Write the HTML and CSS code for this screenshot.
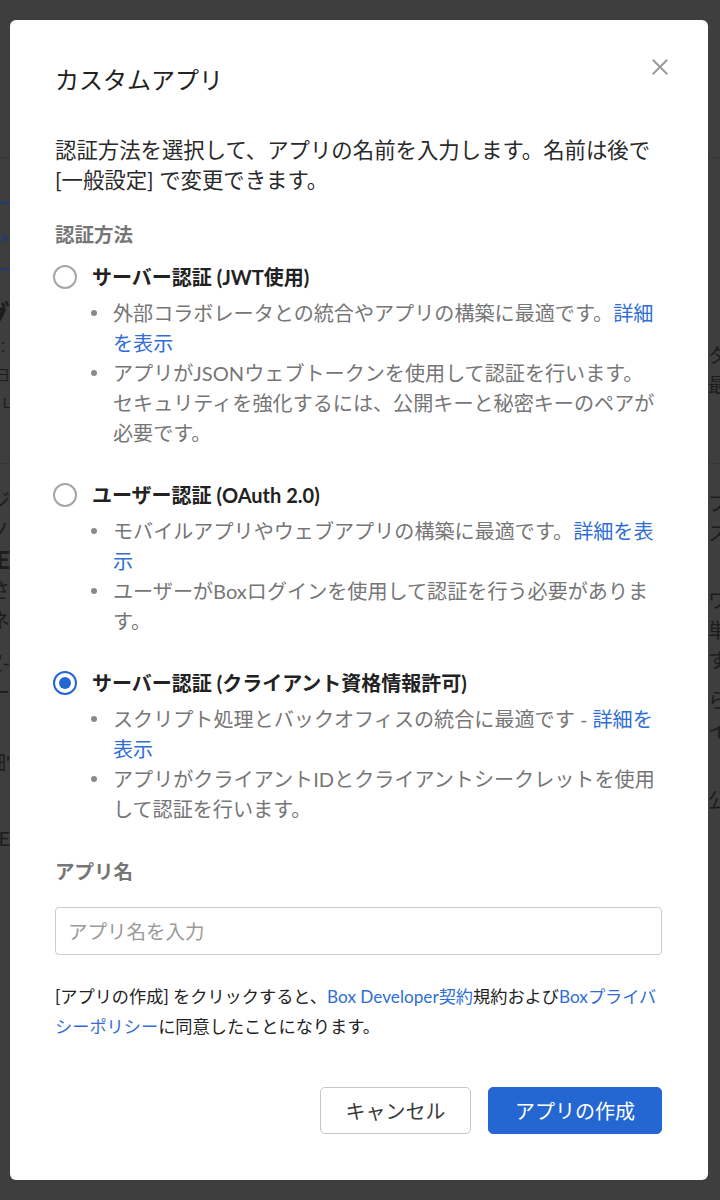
FILE: index.html
```html
<!DOCTYPE html>
<html lang="ja">
<head>
<meta charset="utf-8">
<title>カスタムアプリ</title>
<link rel="stylesheet" href="styles.css">
</head>
<body>
<div class="stage">
  <div class="bg-page" aria-hidden="true">
    <div class="bg-header"></div>
    <div class="bg-sec bg-sec1">
      <div class="bg-left">
        <div class="bg-box"><span class="bg-chev">»</span></div>
        <div class="bg-big">アプリのグ</div>
        <div class="bg-small">説明：</div>
        <div class="bg-small">設定日</div>
        <div class="bg-small">ID L</div>
      </div>
      <div class="bg-right">
        <div class="bg-line r1">タイプ</div>
        <div class="bg-line">最近</div>
      </div>
    </div>
    <div class="bg-sec bg-sec2">
      <div class="bg-left">
        <div class="bg-line l1">アプリジ</div>
        <div class="bg-line">アクセノ</div>
        <div class="bg-line bg-bold">BOXE</div>
        <div class="bg-line">アプリさ</div>
        <div class="bg-line">統合ネ</div>
        <div class="bg-line l2">設定-</div>
        <div class="bg-line">説明ー</div>
        <div class="bg-line l3">詳細'</div>
        <div class="bg-line l4">BOXE</div>
      </div>
      <div class="bg-right">
        <div class="bg-line r2">ブラウザ</div>
        <div class="bg-line">スクリプト</div>
        <div class="bg-line r3">ワークフロー</div>
        <div class="bg-line">単一</div>
        <div class="bg-line">する</div>
        <div class="bg-line r4">らく</div>
        <div class="bg-line">イベント</div>
        <div class="bg-line r5">公開</div>
      </div>
    </div>
  </div>

  <div class="modal-layer">
    <div class="modal" role="dialog" aria-labelledby="modal-title">
      <div class="modal-head">
        <h1 class="modal-title" id="modal-title">カスタムアプリ</h1>
        <button class="close" type="button" aria-label="閉じる">
          <svg width="24" height="24" viewBox="0 0 24 24"><path d="M4.75 4.75L19.25 19.25M19.25 4.75L4.75 19.25" stroke="#9a9a9a" stroke-width="2" stroke-linecap="butt" fill="none"/></svg>
        </button>
      </div>

      <p class="desc">認証方法を選択して、アプリの名前を入力します。名前は後で<br>[一般設定] で変更できます。</p>

      <div class="section-label">認証方法</div>

      <div class="options">
        <div class="option">
          <span class="radio"></span>
          <div class="opt-title">サーバー認証 (JWT使用)</div>
          <ul class="bullets">
            <li><span>外部コラボレータとの統合やアプリの構築に最適です。<a href="#">詳細を表示</a></span></li>
            <li><span>アプリがJSONウェブトークンを使用して認証を行います。<br>セキュリティを強化するには、公開キーと秘密キーのペアが必要です。</span></li>
          </ul>
        </div>
        <div class="option">
          <span class="radio"></span>
          <div class="opt-title">ユーザー認証 (OAuth 2.0)</div>
          <ul class="bullets">
            <li><span>モバイルアプリやウェブアプリの構築に最適です。<a href="#">詳細を表示</a></span></li>
            <li><span>ユーザーがBoxログインを使用して認証を行う必要があります。</span></li>
          </ul>
        </div>
        <div class="option">
          <span class="radio checked"></span>
          <div class="opt-title">サーバー認証 (クライアント資格情報許可)</div>
          <ul class="bullets">
            <li><span>スクリプト処理とバックオフィスの統合に最適です - <a href="#">詳細を表示</a></span></li>
            <li><span>アプリがクライアントIDとクライアントシークレットを使用して認証を行います。</span></li>
          </ul>
        </div>
      </div>

      <label class="section-label field-label" for="app-name">アプリ名</label>
      <input class="text-input" id="app-name" type="text" placeholder="アプリ名を入力">

      <p class="terms">[アプリの作成] をクリックすると、<a href="#">Box Developer契約</a>規約および<a href="#">Boxプライバシーポリシー</a>に同意したことになります。</p>

      <div class="actions">
        <button class="btn btn-secondary" type="button">キャンセル</button>
        <button class="btn btn-primary" type="button">アプリの作成</button>
      </div>
    </div>
  </div>
</div>
</body>
</html>
```

FILE: styles.css
```css
html, body {
  margin: 0;
  padding: 0;
}

body {
  font-family: "Lato", "Noto Sans CJK JP", sans-serif;
  background: #3e3e3e;
  color: #222;
}

.stage {
  display: grid;
  width: 720px;
  height: 1200px;
  overflow: hidden;
}

/* ---------- dimmed page behind the dialog ---------- */
.bg-page,
.modal-layer {
  grid-area: 1 / 1;
}

.bg-page {
  display: flex;
  flex-direction: column;
  background: #3e3e3e;
  overflow: hidden;
  color: #1c1c1c;
}

.bg-header {
  height: 157px;
  flex: 0 0 157px;
  border-bottom: 1px solid #373737;
}

.bg-sec {
  display: flex;
  justify-content: space-between;
}

.bg-sec1 {
  height: 305px;
  flex: 0 0 305px;
  border-bottom: 1px solid #373737;
}

.bg-sec2 {
  flex: 1;
}

.bg-left {
  width: 10px;
  overflow: hidden;
  display: flex;
  flex-direction: column;
  align-items: flex-end;
}

.bg-right {
  width: 12px;
  overflow: hidden;
  display: flex;
  flex-direction: column;
  align-items: flex-start;
}

.bg-box {
  margin-top: 44px;
  width: 40px;
  height: 68px;
  box-sizing: border-box;
  border: 2px solid #1e3a70;
  border-right: none;
  display: flex;
  align-items: center;
  justify-content: flex-end;
  padding-right: 1px;
  flex: 0 0 auto;
}

.bg-chev {
  color: #1e3a70;
  font-size: 22px;
  line-height: 1;
}

.bg-big {
  margin-top: 27px;
  font-size: 30px;
  font-weight: 700;
  line-height: 36px;
  white-space: nowrap;
}

.bg-small {
  font-size: 14px;
  line-height: 28px;
  white-space: nowrap;
}

.bg-small:nth-of-type(1) { margin-top: 6px; }

.bg-line {
  font-size: 20px;
  line-height: 30px;
  height: 30px;
  white-space: nowrap;
  flex: 0 0 auto;
}

.bg-bold { font-weight: 700; font-size: 24px; }

.r1 { margin-top: 182px; }
.r2 { margin-top: 24px; }
.r3 { margin-top: 37px; }
.r4 { margin-top: 10px; }
.r5 { margin-top: 40px; }

.l1 { margin-top: 21px; }
.l2 { margin-top: 12px; }
.l3 { margin-top: 40px; }
.l4 { margin-top: 46px; }

/* ---------- dialog ---------- */
.modal-layer {
  display: flex;
  padding: 20px 12px 20px 10px;
}

.modal {
  flex: 1;
  background: #fff;
  border-radius: 6px;
  padding: 42px 46px 46px 45px;
  display: flex;
  flex-direction: column;
}

.modal-head {
  display: flex;
  justify-content: space-between;
  align-items: flex-start;
}

.modal-title {
  margin: 0;
  font-size: 24px;
  line-height: 36px;
  font-weight: 400;
  color: #222;
}

.close {
  width: 24px;
  height: 24px;
  margin: -7px -10px 0 0;
  padding: 0;
  border: 0;
  background: none;
  display: flex;
  cursor: pointer;
}

.desc {
  margin: 37px 0 0;
  font-size: 21.4px;
  line-height: 30px;
  color: #2a2a2a;
}

.section-label {
  display: block;
  margin-top: 25px;
  font-size: 19.5px;
  line-height: 30px;
  font-weight: 700;
  color: #767676;
}

.options {
  margin-top: 12px;
  display: flex;
  flex-direction: column;
  gap: 32px;
}

.option {
  display: grid;
  grid-template-columns: 24px 1fr;
  column-gap: 15px;
  margin-left: -2px;
}

.radio {
  width: 24px;
  height: 24px;
  margin-top: 3px;
  box-sizing: border-box;
  border: 2px solid #a6a6a6;
  border-radius: 50%;
  display: flex;
  align-items: center;
  justify-content: center;
}

.radio.checked {
  border-color: #2567d2;
}

.radio.checked::after {
  content: "";
  width: 12px;
  height: 12px;
  border-radius: 50%;
  background: #2567d2;
}

.opt-title {
  font-size: 20px;
  line-height: 30px;
  font-weight: 700;
  color: #222;
}

.bullets {
  grid-column: 2;
  list-style: none;
  margin: 6px 0 0;
  padding: 0;
}

.bullets li {
  display: flex;
  font-size: 20.1px;
  line-height: 30px;
  color: #767676;
}

.bullets li::before {
  content: "";
  flex: 0 0 6px;
  height: 6px;
  margin: 12px 16px 0 -1px;
  border-radius: 50%;
  background: #8a8a8a;
}

a {
  color: #2f6ed6;
  text-decoration: none;
}

.field-label {
  margin-top: 33px;
}

.text-input {
  margin-top: 20px;
  width: 100%;
  height: 48px;
  box-sizing: border-box;
  border: 1px solid #cdcdcd;
  border-radius: 4px;
  padding: 0 12px;
  font-family: inherit;
  font-size: 19.5px;
  color: #222;
  background: #fff;
  outline: none;
}

.text-input::placeholder {
  color: #9a9a9a;
}

.terms {
  margin: 27px 0 0;
  font-size: 17.2px;
  line-height: 30px;
  color: #222;
}

.actions {
  margin-top: auto;
  display: flex;
  justify-content: flex-end;
  gap: 17px;
}

.btn {
  height: 47px;
  box-sizing: border-box;
  border-radius: 5px;
  font-family: inherit;
  font-size: 20px;
  padding: 0;
  cursor: pointer;
}

.btn-secondary {
  width: 151px;
  background: #fff;
  border: 1px solid #c6c6c6;
  color: #3a3a3a;
}

.btn-primary {
  width: 174px;
  background: #2567d2;
  border: 1px solid #2567d2;
  color: #fff;
}
```
